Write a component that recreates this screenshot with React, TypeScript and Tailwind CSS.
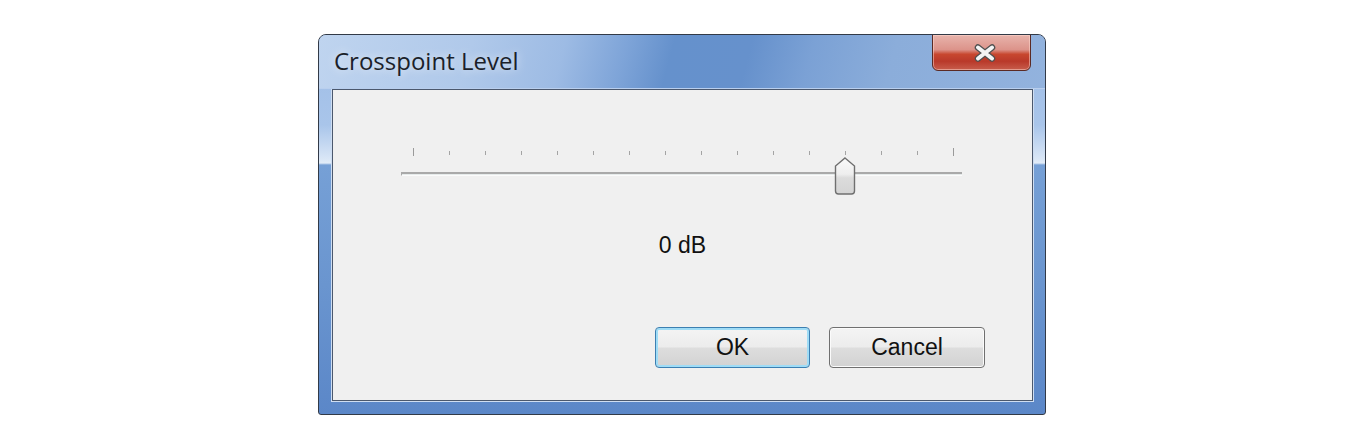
import React from "react";

const TICKS = Array.from({ length: 16 }, (_, i) => i);

const CloseGlyph = () => (
  <svg width="26" height="18" viewBox="0 0 26 18">
    <path
      d="M6 3.5 L20 14.5 M20 3.5 L6 14.5"
      stroke="#505050"
      strokeWidth="6.5"
      strokeLinecap="round"
      fill="none"
    />
    <path
      d="M6 3.5 L20 14.5 M20 3.5 L6 14.5"
      stroke="#f4f4f4"
      strokeWidth="4"
      strokeLinecap="round"
      fill="none"
    />
  </svg>
);

const Thumb = () => (
  <svg width="22" height="38" viewBox="0 0 22 38" className="absolute left-[433px] top-[9px]">
    <defs>
      <linearGradient id="thumbFill" x1="0" y1="0" x2="0" y2="1">
        <stop offset="0" stopColor="#fafafa" />
        <stop offset="0.45" stopColor="#eeeeee" />
        <stop offset="0.55" stopColor="#dcdcdc" />
        <stop offset="1" stopColor="#d4d4d4" />
      </linearGradient>
    </defs>
    <path
      d="M11 1 L20.5 9 L20.5 34 Q20.5 37 17.5 37 L4.5 37 Q1.5 37 1.5 34 L1.5 9 Z"
      fill="url(#thumbFill)"
      stroke="#6f6f6f"
      strokeWidth="1.4"
    />
  </svg>
);

const Slider = () => (
  <div className="relative ml-[68px] w-[561px]">
    <div className="ml-[12px] w-[541px] h-[8px] flex justify-between items-end">
      {TICKS.map((t) =>
        t === 0 || t === 15 ? (
          <span key={t} className="w-px h-[8px] bg-[#9a9a9a]" />
        ) : (
          <span key={t} className="w-px h-[4px] mb-[1px] bg-[#a4a4a4]" />
        )
      )}
    </div>
    <div className="mt-[16px] h-[4px] w-[561px] border-t-2 border-l border-[#a9a9a9] bg-[#e6ebeb] border-b border-b-[#fbfbfb]" />
    <Thumb />
  </div>
);

const Button = ({ label, focused }: { label: string; focused?: boolean }) => (
  <button
    className={
      focused
        ? "w-[155px] h-[41px] rounded-[4px] border border-[#3c7fb1] shadow-[inset_0_0_0_2px_#9fdcf6] bg-[linear-gradient(180deg,#f4f4f4_0%,#ececec_48%,#dddddd_52%,#d2d2d2_100%)] text-[23px] text-[#111] font-['Liberation_Sans',Arial,sans-serif] leading-none"
        : "w-[156px] h-[41px] rounded-[4px] border border-[#707070] shadow-[inset_0_0_0_1px_#fbfbfb] bg-[linear-gradient(180deg,#f4f4f4_0%,#ececec_48%,#dddddd_52%,#d2d2d2_100%)] text-[23px] text-[#111] font-['Liberation_Sans',Arial,sans-serif] leading-none"
    }
  >
    {label}
  </button>
);

export default function App() {
  return (
    <div className="w-full h-[444px] bg-white pt-[34px] pl-[318px]">
      <div className="w-[728px] h-[381px] rounded-t-[8px] rounded-b-[3px] border border-[#323a47] overflow-hidden flex flex-col bg-[linear-gradient(180deg,#9dbce6_0px,#a9c5ea_90px,#d9e6f6_124px,#e2ecf8_128px,#76a0d6_130px,#6a95cf_250px,#5b87c8_100%)]">
        {/* title bar */}
        <div className="relative h-[54px] shrink-0 flex justify-between items-start bg-[linear-gradient(105deg,#bfd4ef_0px,#b0c9ea_150px,#9dbbe4_240px,#7ea4d8_300px,#6591cc_345px,#6691cc_420px,#7ba1d5_480px,#8badda_560px,#93b3de_728px)] border-b border-b-[#b9cfee]">
          <div className="pl-[15px] pt-[10px] text-[24px] leading-[32px] text-[#1b1f2a] font-['Open_Sans','Noto_Sans',sans-serif] [text-shadow:0_0_10px_rgba(255,255,255,0.8)]">
            Crosspoint Level
          </div>
          <div className="mr-[14px] -mt-px w-[99px] h-[37px] rounded-b-[6px] border border-[#5b2a24] shadow-[inset_0_0_0_1px_rgba(255,220,210,0.5)] bg-[linear-gradient(180deg,#e8b4ac_0%,#dc938a_42%,#c8472f_55%,#b9392a_75%,#c75d4c_100%)] flex items-center justify-center pl-[6px]">
            <CloseGlyph />
          </div>
        </div>
        {/* client area */}
        <div className="ml-[13px] mr-[12px] h-[312px] border border-[#4b586d] shadow-[0_0_0_1px_#cfdef2] bg-[#f0f0f0] flex flex-col">
          <div className="mt-[58px]">
            <Slider />
          </div>
          <div className="mt-[56px] text-center text-[23px] leading-[26px] text-[#111] font-['Liberation_Sans',Arial,sans-serif]">
            0 dB
          </div>
          <div className="mt-[69px] flex justify-end gap-[19px] pr-[47px]">
            <Button label="OK" focused />
            <Button label="Cancel" />
          </div>
        </div>
      </div>
    </div>
  );
}
